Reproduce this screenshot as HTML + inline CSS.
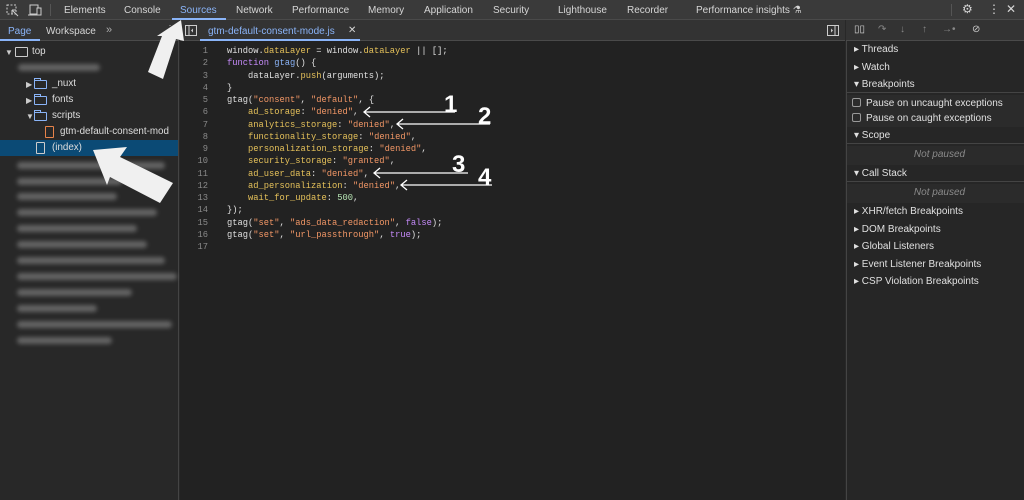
<!DOCTYPE html>
<html><head><meta charset="utf-8"><style>
*{margin:0;padding:0;box-sizing:border-box}
body{width:1024px;height:500px;background:#282828;font-family:"Liberation Sans",sans-serif;color:#e3e3e3;font-size:10px;overflow:hidden;position:relative}
.a{position:absolute}
.top{left:0;top:0;width:1024px;height:20px;background:#3a3a3a;border-bottom:1px solid #4a4a4a}
.tab{position:absolute;top:5px;font-size:10px;color:#d6d6d6}
.bar2{top:20px;height:21px;background:#333;border-bottom:1px solid #4a4a4a}
.left{left:0;top:41px;width:179px;height:459px;background:#282828;border-right:1px solid #444}
.ed{left:180px;top:41px;width:665px;height:459px;background:#222}
.right{left:846px;top:41px;width:178px;height:459px;background:#262626;border-left:1px solid #444}
.code{font-family:"Liberation Mono",monospace;font-size:8.75px;line-height:12.25px;white-space:pre;color:#e0e0e0}
.ln{color:#8a8a8a;text-align:right;width:28px}
.y{color:#e5c15a}.s{color:#f29766}.k{color:#c58af9}.f{color:#8ab4f8}.n{color:#b5e3b2}
.row{position:absolute;font-size:9.8px;color:#dedede;white-space:nowrap}
.tri{position:absolute;font-size:8px;color:#ccc}
.fold{position:absolute;width:13px;height:9px;border:1.2px solid #8ab4f8;border-radius:1px}
.fold:before{content:"";position:absolute;left:-1px;top:-3px;width:5px;height:2px;border:1.2px solid #8ab4f8;border-bottom:none}
.file{position:absolute;width:9px;height:12px;border:1.2px solid #ccc;border-radius:1px}
.blur{position:absolute;height:7px;background:#777;border-radius:4px;filter:blur(2px);opacity:.75}
.rh{position:absolute;left:0;width:178px;height:17px;font-size:10px;padding-left:7px;line-height:17px;color:#e0e0e0}
.np{text-align:center;font-style:italic;color:#8a8a8a;background:#2b2b2b}
.cb{display:inline-block;width:9px;height:9px;border:1px solid #999;border-radius:2px;vertical-align:-1px;margin-right:5px}
</style></head><body>
<div class="a top">
<svg class="a" style="left:6px;top:4px" width="14" height="13"><rect x="1" y="1" width="9" height="9" fill="none" stroke="#ccc" stroke-dasharray="2 1.5"/><path d="M6 6l6 6M6 6v4M6 6h4" stroke="#ccc" fill="none"/></svg>
<svg class="a" style="left:28px;top:4px" width="14" height="12"><rect x="2" y="1" width="8" height="9" fill="none" stroke="#ccc"/><rect x="9" y="4" width="4" height="7" fill="#3a3a3a" stroke="#ccc"/><path d="M0 11h9" stroke="#ccc"/></svg>
<div class="a" style="left:50px;top:4px;width:1px;height:12px;background:#555"></div>
<span class="tab" style="left:64px">Elements</span>
<span class="tab" style="left:124px">Console</span>
<span class="tab" style="left:180px;color:#8ab4f8">Sources</span>
<div class="a" style="left:172px;top:18px;width:54px;height:2px;background:#8ab4f8"></div>
<span class="tab" style="left:236px">Network</span>
<span class="tab" style="left:292px">Performance</span>
<span class="tab" style="left:368px">Memory</span>
<span class="tab" style="left:424px">Application</span>
<span class="tab" style="left:493px">Security</span>
<span class="tab" style="left:558px">Lighthouse</span>
<span class="tab" style="left:627px">Recorder</span>
<span class="tab" style="left:696px">Performance insights ⚗</span>
<div class="a" style="left:951px;top:4px;width:1px;height:12px;background:#555"></div>
<span class="tab" style="left:962px;top:2px;font-size:12px">⚙</span>
<span class="tab" style="left:988px;top:2px;font-size:12px">⋮</span>
<span class="tab" style="left:1006px;top:2px;font-size:12px">✕</span>
</div>
<div class="a bar2" style="left:0;width:179px">
<span class="tab" style="left:8px;top:6px;color:#8ab4f8">Page</span>
<span class="tab" style="left:46px;top:6px">Workspace</span>
<span class="tab" style="left:106px;top:4px;font-size:11px;color:#aaa">»</span>
<span class="tab" style="left:165px;top:4px;color:#aaa">⋮</span>
<div class="a" style="left:0;top:19px;width:40px;height:2px;background:#8ab4f8"></div>
</div>
<div class="a bar2" style="left:180px;width:665px">
<svg class="a" style="left:5px;top:5px" width="12" height="11"><rect x=".5" y=".5" width="11" height="10" fill="none" stroke="#ccc"/><path d="M4 1v9" stroke="#ccc"/><path d="M8 3.5L6 5.5 8 7.5" fill="#ccc"/></svg>
<span class="tab" style="left:28px;top:6px;color:#8ab4f8">gtm-default-consent-mode.js</span>
<span class="tab" style="left:168px;top:5px">✕</span>
<div class="a" style="left:20px;top:19px;width:160px;height:2px;background:#8ab4f8"></div>
<svg class="a" style="left:647px;top:5px" width="12" height="11"><rect x=".5" y=".5" width="11" height="10" fill="none" stroke="#ccc"/><path d="M8 1v9" stroke="#ccc"/><path d="M4 3.5L6 5.5 4 7.5" fill="#ccc"/></svg>
</div>
<div class="a bar2" style="left:846px;width:178px">
<span class="tab" style="left:8px;top:4px;font-size:10px">▯▯</span>
<span class="tab" style="left:32px;top:4px;color:#888">↷</span>
<span class="tab" style="left:54px;top:4px;color:#888">↓</span>
<span class="tab" style="left:76px;top:4px;color:#888">↑</span>
<span class="tab" style="left:96px;top:4px;color:#888">→•</span>
<span class="tab" style="left:126px;top:4px;color:#ccc">⊘</span>
</div>
<div class="a left">
<div class="a" style="left:0;top:99px;width:178px;height:16px;background:#0b4a75"></div>
<span class="tri" style="left:5px;top:7px">▼</span>
<div class="a" style="left:15px;top:6px;width:13px;height:10px;border:1.2px solid #ccc;border-radius:1px"></div>
<div class="row" style="top:5px;left:32px">top</div>
<div class="blur" style="left:18px;top:23px;width:82px"></div>
<span class="tri" style="left:26px;top:39px">▶</span><div class="fold" style="left:34px;top:39px"></div>
<div class="row" style="top:37px;left:52px">_nuxt</div>
<span class="tri" style="left:26px;top:55px">▶</span><div class="fold" style="left:34px;top:55px"></div>
<div class="row" style="top:53px;left:52px">fonts</div>
<span class="tri" style="left:26px;top:71px">▼</span><div class="fold" style="left:34px;top:71px"></div>
<div class="row" style="top:69px;left:52px">scripts</div>
<div class="file" style="left:45px;top:85px;border-color:#e8834a"></div>
<div class="row" style="top:85px;left:60px">gtm-default-consent-mod</div>
<div class="file" style="left:36px;top:101px"></div>
<div class="row" style="top:101px;left:52px">(index)</div>
<div class="blur" style="left:17px;top:121px;width:148px"></div>
<div class="blur" style="left:17px;top:137px;width:105px"></div>
<div class="blur" style="left:17px;top:152px;width:100px"></div>
<div class="blur" style="left:17px;top:168px;width:140px"></div>
<div class="blur" style="left:17px;top:184px;width:120px"></div>
<div class="blur" style="left:17px;top:200px;width:130px"></div>
<div class="blur" style="left:17px;top:216px;width:148px"></div>
<div class="blur" style="left:17px;top:232px;width:160px"></div>
<div class="blur" style="left:17px;top:248px;width:115px"></div>
<div class="blur" style="left:17px;top:264px;width:80px"></div>
<div class="blur" style="left:17px;top:280px;width:155px"></div>
<div class="blur" style="left:17px;top:296px;width:95px"></div>
</div>
<div class="a ed">
<div class="a code ln" style="left:0;top:4px">1
2
3
4
5
6
7
8
9
10
11
12
13
14
15
16
17</div>
<div class="a code" style="left:47px;top:4px">window.<span class="y">dataLayer</span> = window.<span class="y">dataLayer</span> || [];
<span class="k">function</span> <span class="f">gtag</span>() {
    dataLayer.<span class="y">push</span>(arguments);
}
gtag(<span class="s">"consent"</span>, <span class="s">"default"</span>, {
    <span class="y">ad_storage</span>: <span class="s">"denied"</span>,
    <span class="y">analytics_storage</span>: <span class="s">"denied"</span>,
    <span class="y">functionality_storage</span>: <span class="s">"denied"</span>,
    <span class="y">personalization_storage</span>: <span class="s">"denied"</span>,
    <span class="y">security_storage</span>: <span class="s">"granted"</span>,
    <span class="y">ad_user_data</span>: <span class="s">"denied"</span>,
    <span class="y">ad_personalization</span>: <span class="s">"denied"</span>,
    <span class="y">wait_for_update</span>: <span class="n">500</span>,
});
gtag(<span class="s">"set"</span>, <span class="s">"ads_data_redaction"</span>, <span class="k">false</span>);
gtag(<span class="s">"set"</span>, <span class="s">"url_passthrough"</span>, <span class="k">true</span>);
</div>
</div>
<div class="a right">
<div class="rh" style="top:0">▸ Threads</div>
<div class="rh" style="top:18px">▸ Watch</div>
<div class="rh" style="top:35px;border-bottom:1px solid #444">▾ Breakpoints</div>
<div class="rh" style="top:54px;background:#2b2b2b;padding-left:5px"><span class="cb"></span>Pause on uncaught exceptions</div>
<div class="rh" style="top:69px;background:#2b2b2b;padding-left:5px"><span class="cb"></span>Pause on caught exceptions</div>
<div class="rh" style="top:86px;border-bottom:1px solid #444">▾ Scope</div>
<div class="rh np" style="top:105px;height:19px">Not paused</div>
<div class="rh" style="top:124px;border-bottom:1px solid #444">▾ Call Stack</div>
<div class="rh np" style="top:143px;height:19px">Not paused</div>
<div class="rh" style="top:162px">▸ XHR/fetch Breakpoints</div>
<div class="rh" style="top:180px">▸ DOM Breakpoints</div>
<div class="rh" style="top:197px">▸ Global Listeners</div>
<div class="rh" style="top:215px">▸ Event Listener Breakpoints</div>
<div class="rh" style="top:232px">▸ CSP Violation Breakpoints</div>
</div>
<svg class="a" style="left:0;top:0" width="1024" height="500">
<polygon points="181,20 184,41 176,39 163,79 148,72 162,36 157,36" fill="#f0f0f0"/>
<polygon points="93,150 127,147 120,157 173,183 160,203 110,177 107,185" fill="#f0f0f0"/>
<g stroke="#fff" stroke-width="1.3" fill="none">
<path d="M364 112H455M370 107l-6 5 6 5"/>
<path d="M397 124H490M403 119l-6 5 6 5"/>
<path d="M374 173H468M380 168l-6 5 6 5"/>
<path d="M401 185H492M407 180l-6 5 6 5"/>
</g>
<g fill="#fff" font-family="Liberation Sans,sans-serif" font-weight="bold" font-size="24">
<text x="444" y="112">1</text><text x="478" y="124">2</text>
<text x="452" y="172">3</text><text x="478" y="185">4</text>
</g>
</svg>
</body></html>
